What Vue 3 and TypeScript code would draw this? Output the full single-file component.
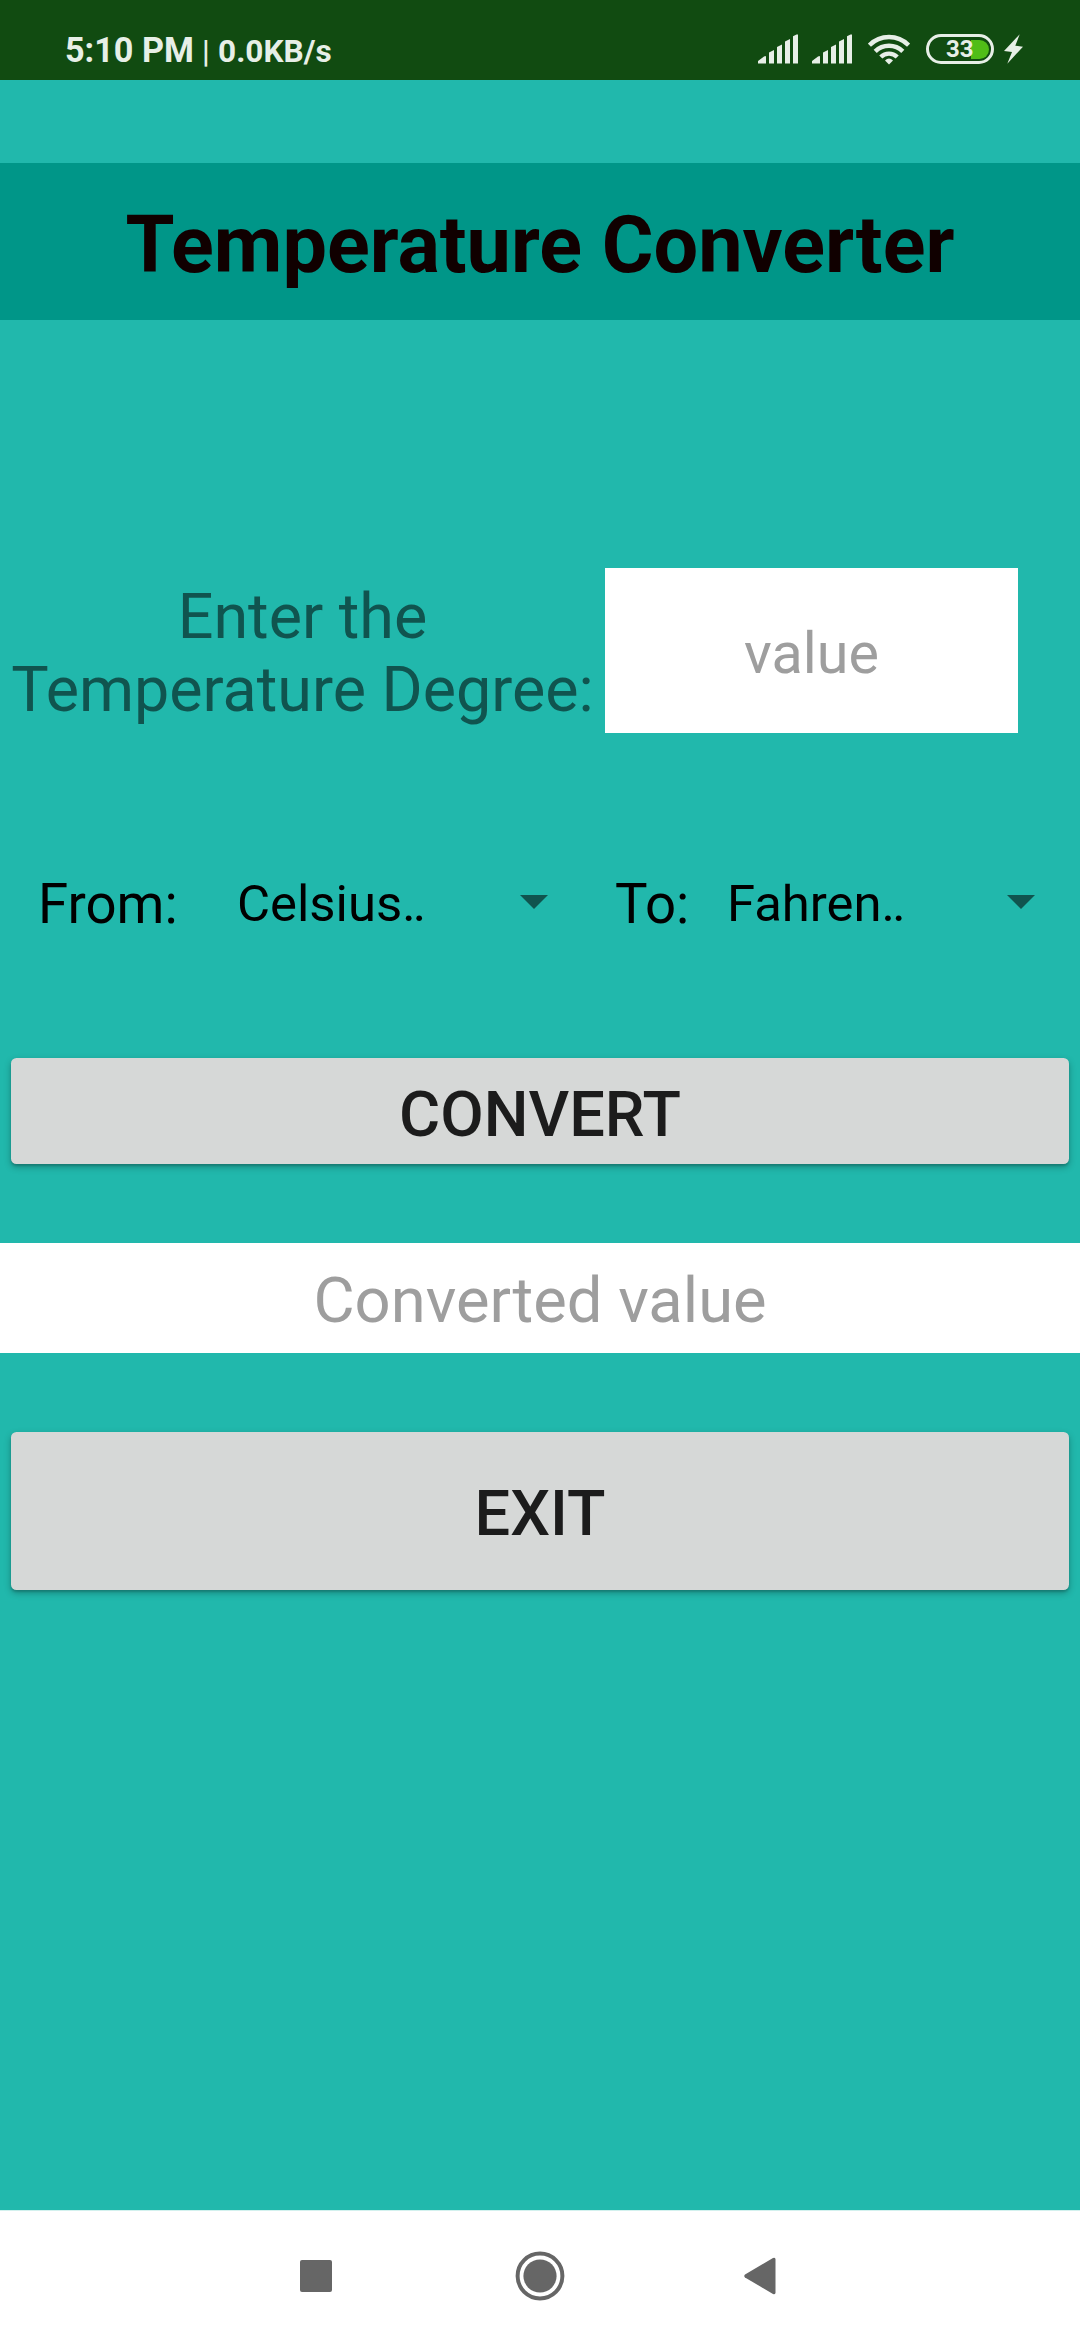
<script setup lang="ts">
import { ref } from 'vue'

const degree = ref('')
const result = ref('')
const signals = [0, 1]
</script>

<template>
  <div class="screen">
    <header class="status">
      <div class="status-left">
        <span class="time">5:10 PM</span>
        <span class="bar">|</span>
        <span class="speed">0.0KB/s</span>
      </div>
      <div class="status-right">
        <svg v-for="s in signals" :key="s" class="signal" width="40" height="30" viewBox="0 0 40 30">
          <path d="M0 27 L6 22.6 Q8 21.4 8 23 V29.5 H0Z M11 18.5 L16 16 V29.5 H11Z M19 13 L24 10.5 V29.5 H19Z M27 7.5 L32 5 V29.5 H27Z M35 2.2 L38.5 0.5 H40 V29.5 H35Z" />
        </svg>
        <svg class="wifi" width="42" height="31" viewBox="0 0 42 31">
          <g fill="none" stroke="#e7efe7" stroke-width="4.4">
            <path d="M1.4 11.2 A27.5 27.5 0 0 1 40.6 11.2" />
            <path d="M7.2 17.4 A19.5 19.5 0 0 1 34.8 17.4" />
            <path d="M12.8 23 A11.6 11.6 0 0 1 29.2 23" />
          </g>
          <path d="M21 30.5 L17 26.4 Q21 22.6 25 26.4Z" />
        </svg>
        <div class="battery">
          <div class="charge"></div>
          <span class="percent">33</span>
        </div>
        <svg class="bolt" width="19" height="30" viewBox="0 0 19 30">
          <path d="M15.7 0.3 L0 17 L8 18 L3.3 29.7 L19 12.7 L11.3 11.7Z" />
        </svg>
      </div>
    </header>

    <main class="content">
      <h1 class="title">Temperature Converter</h1>

      <section class="entry">
        <label class="entry-label" for="degree">Enter the<br />Temperature Degree:</label>
        <input id="degree" v-model="degree" class="entry-input" placeholder="value" />
      </section>

      <section class="units">
        <span class="unit-label from">From:</span>
        <div class="spinner spinner-from">
          <span>Celsius<span class="dots">..</span></span>
          <svg width="28" height="14" viewBox="0 0 28 14"><path d="M0 0H28L14 14Z" /></svg>
        </div>
        <span class="unit-label to">To:</span>
        <div class="spinner spinner-to">
          <span>Fahren<span class="dots">..</span></span>
          <svg width="28" height="14" viewBox="0 0 28 14"><path d="M0 0H28L14 14Z" /></svg>
        </div>
      </section>

      <button class="btn convert">CONVERT</button>
      <input v-model="result" class="result" placeholder="Converted value" readonly />
      <button class="btn exit">EXIT</button>
    </main>

    <nav class="nav">
      <svg width="32" height="32" viewBox="0 0 32 32"><rect width="32" height="32" rx="2" /></svg>
      <svg width="50" height="50" viewBox="0 0 50 50">
        <circle cx="25" cy="25" r="22.4" fill="none" stroke="#666" stroke-width="4" />
        <circle cx="25" cy="25" r="16.6" />
      </svg>
      <svg width="32" height="38" viewBox="0 0 32 38">
        <path d="M1 17.6 L29 1 Q31.5 0 31.5 2.5 V35.5 Q31.5 38 29 37 L1 20.4 Q-0.5 19 1 17.6Z" />
      </svg>
    </nav>
  </div>
</template>

<style>
body {
  margin: 0;
}
</style>

<style scoped>
.screen {
  width: 1080px;
  height: 2340px;
  display: flex;
  flex-direction: column;
  background: #21b8ac;
  font-family: Roboto, sans-serif;
  overflow: hidden;
}
.status {
  height: 80px;
  flex: none;
  box-sizing: border-box;
  padding: 20px 57px 0 65px;
  display: flex;
  justify-content: space-between;
  align-items: flex-start;
  background: #114b11;
  color: #e7efe7;
}
.status-left {
  display: flex;
  align-items: baseline;
  padding-top: 10px;
  font-weight: 700;
  line-height: 40px;
  white-space: pre;
}
.time {
  width: 137px;
  font-size: 34.2px;
}
.bar {
  width: 16px;
  font-size: 31px;
  font-weight: 500;
}
.speed {
  font-size: 31.6px;
}
.status-right {
  display: flex;
  padding-top: 14px;
  fill: #e7efe7;
}
.signal {
  margin-right: 14px;
}
.wifi {
  margin: 0 16px 0 2px;
}
.battery {
  position: relative;
  width: 68px;
  height: 30px;
  box-sizing: border-box;
  border: 3px solid #e7efe7;
  border-radius: 15px;
  margin-right: 10px;
}
.charge {
  position: absolute;
  right: 2.5px;
  top: 2.5px;
  width: 18px;
  height: 19px;
  border-radius: 0 9.5px 9.5px 0;
  background: #50bd17;
}
.percent {
  position: absolute;
  left: 17px;
  top: 0;
  font-size: 24px;
  line-height: 24px;
  font-weight: 700;
}
.content {
  flex: 1;
  display: flex;
  flex-direction: column;
}
.title {
  margin: 83px 0 0;
  height: 157px;
  line-height: 165px;
  text-align: center;
  background: #009688;
  color: #100000;
  font-size: 79.2px;
  font-weight: 700;
}
.entry {
  display: flex;
  margin-top: 248px;
  height: 165px;
}
.entry-label {
  width: 605px;
  padding-top: 12px;
  text-align: center;
  font-size: 62.8px;
  line-height: 73px;
  color: #10544f;
}
.entry-input,
.result {
  box-sizing: border-box;
  border: 0;
  border-radius: 0;
  outline: 0;
  background: #fff;
  text-align: center;
  font-family: inherit;
  color: #1c1c1c;
}
.entry-input {
  width: 413px;
  height: 165px;
  padding: 6px 0 0;
  font-size: 57.5px;
}
.entry-input::placeholder,
.result::placeholder {
  color: #9e9e9e;
  opacity: 1;
}
.units {
  display: flex;
  align-items: flex-start;
  margin-top: 130px;
  height: 80px;
  line-height: 80px;
  color: #000;
}
.unit-label {
  font-size: 54.6px;
  line-height: 82px;
}
.from {
  width: 199px;
  padding-left: 38px;
}
.to {
  width: 112px;
  padding-left: 67px;
}
.spinner {
  display: flex;
  align-items: flex-start;
  justify-content: space-between;
  font-size: 50.8px;
  line-height: 81px;
}
.dots {
  letter-spacing: -2.7px;
}
.spinner svg {
  fill: #10544f;
  margin-top: 32px;
}
.spinner-from {
  width: 311px;
}
.spinner-to {
  width: 308px;
}
.btn {
  flex: none;
  margin: 0 11px;
  padding: 0;
  border: 0;
  border-radius: 5.5px;
  background: #d6d8d7;
  color: #1c1c1c;
  font-family: inherit;
  font-size: 63.1px;
  font-weight: 500;
  box-shadow: 0 3px 7px rgba(0, 0, 0, 0.28), 0 2px 2px rgba(0, 0, 0, 0.14);
}
.convert {
  height: 106px;
  margin-top: 115px;
  padding-top: 6px;
}
.result {
  flex: none;
  margin-top: 79px;
  width: 1080px;
  height: 110px;
  padding: 4px 0 0;
  font-size: 63.3px;
}
.exit {
  height: 158px;
  margin-top: 79px;
  padding-top: 4px;
}
.nav {
  height: 130px;
  flex: none;
  box-sizing: border-box;
  border-top: 1px solid #d3f1ee;
  background: #fff;
  display: flex;
  align-items: center;
  padding-left: 300px;
  fill: #666;
}
.nav svg:nth-child(2) {
  margin: 0 179px 0 183px;
}
</style>
